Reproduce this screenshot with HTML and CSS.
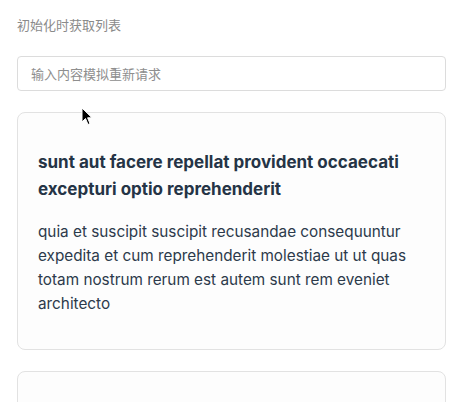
FILE: index.html
```html
<!DOCTYPE html>
<html lang="zh">
<head>
<meta charset="utf-8">
<link rel="stylesheet" href="styles.css">
</head>
<body>
<div class="page">
  <div class="label">初始化时获取列表</div>
  <input class="search" type="text" placeholder="输入内容模拟重新请求">
  <div class="list">
    <div class="card">
      <h3 class="card-title">sunt aut facere repellat provident occaecati excepturi optio reprehenderit</h3>
      <p class="card-body">quia et suscipit suscipit recusandae consequuntur expedita et cum reprehenderit molestiae ut ut quas totam nostrum rerum est autem sunt rem eveniet architecto</p>
    </div>
    <div class="card card-empty"></div>
  </div>
</div>
<svg class="cursor" width="12" height="19" viewBox="0 0 12 19"><path d="M1 1 L1 15 L4.5 11.5 L7 17.5 L9 16.6 L6.6 10.8 L11 10.8 Z" fill="#000" stroke="#fff" stroke-width="1"/></svg>
</body>
</html>
```
FILE: styles.css
```css
html, body {
  margin: 0;
  padding: 0;
  background: #fff;
  overflow: hidden;
  height: 402px;
}
body {
  font-family: Inter, "Noto Sans CJK SC", sans-serif;
}
.page {
  padding: 15px 14px 0 17px;
  display: flex;
  flex-direction: column;
}
.label {
  font-size: 13px;
  color: #8a8a8a;
  line-height: 20px;
  font-family: "Noto Sans CJK SC", sans-serif;
}
.search {
  margin-top: 21px;
  height: 35px;
  box-sizing: border-box;
  border: 1px solid #dcdcdc;
  border-radius: 4px;
  padding: 0 13px;
  font-size: 13px;
  font-family: "Noto Sans CJK SC", sans-serif;
  color: #333;
  outline: none;
}
.search::placeholder {
  color: #8e8e8e;
}
.list {
  margin-top: 21px;
  display: flex;
  flex-direction: column;
  gap: 21px;
}
.card {
  border: 1px solid #e2e2e2;
  border-radius: 8px;
  padding: 36px 20px 33px 20px;
  background: #fdfdfd;
}
.card-empty {
  min-height: 60px;
}
.card-title {
  margin: 0;
  font-size: 17px;
  font-weight: 700;
  line-height: 27px;
  color: #253446;
}
.card-body {
  margin: 17px 0 0;
  font-size: 15.3px;
  line-height: 24px;
  color: #2c3a4b;
}
.cursor {
  position: absolute;
  left: 81px;
  top: 107px;
}
```
